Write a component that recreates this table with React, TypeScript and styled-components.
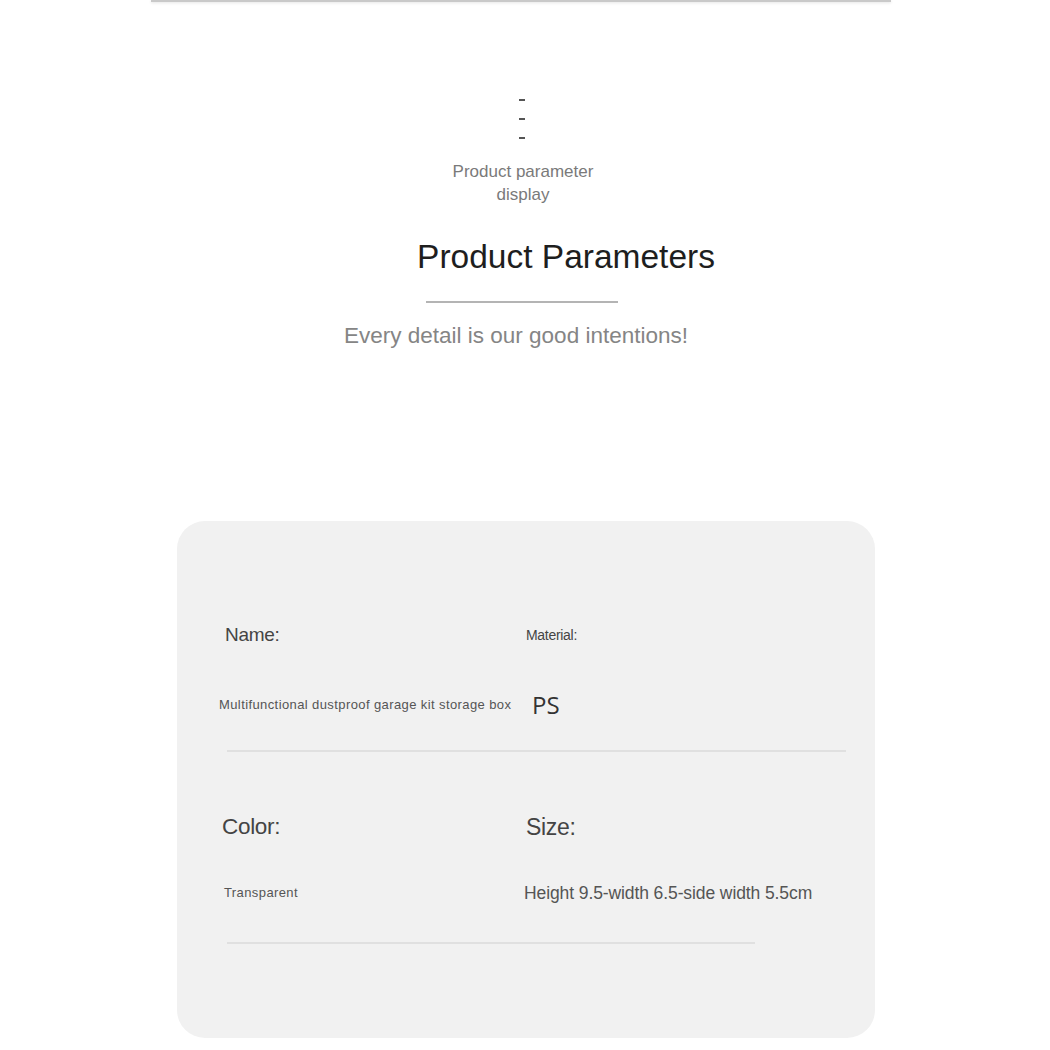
import React from "react";
import styled, { createGlobalStyle } from "styled-components";

const Global = createGlobalStyle`
  html, body { margin: 0; padding: 0; background: #ffffff; }
  body { font-family: "Liberation Sans", Arial, sans-serif; }
`;

const Page = styled.div`
  width: 1050px;
  height: 1050px;
  display: flex;
  flex-direction: column;
  overflow: hidden;
  background: #fff;
`;

const TopRule = styled.div`
  margin-left: 151px;
  width: 740px;
  height: 2px;
  background: #c9c9c9;
  box-shadow: 0 1px 3px rgba(0, 0, 0, 0.12);
`;

const Dashes = styled.div`
  margin-top: 97px;
  margin-left: 519px;
  display: flex;
  flex-direction: column;
  gap: 17px;
`;

const Dash = styled.span`
  display: block;
  width: 6px;
  height: 2px;
  background: #555;
`;

const Centered = styled.div<{ $shift: number }>`
  width: 1050px;
  text-align: center;
  box-sizing: border-box;
  padding-left: ${(p) => (p.$shift > 0 ? p.$shift * 2 : 0)}px;
  padding-right: ${(p) => (p.$shift < 0 ? -p.$shift * 2 : 0)}px;
`;

const Kicker = styled(Centered)`
  margin-top: 21px;
  font-size: 17px;
  line-height: 23px;
  color: #7a7a7a;
`;

const Title = styled(Centered)`
  margin-top: 32px;
  font-size: 33.5px;
  line-height: 38px;
  color: #1e1e1e;
`;

const Underline = styled.div`
  margin-top: 25px;
  margin-left: 426px;
  width: 192px;
  height: 2px;
  background: #b4b4b4;
`;

const Tagline = styled(Centered)`
  margin-top: 21px;
  font-size: 22.5px;
  line-height: 24px;
  color: #858585;
`;

const Card = styled.div`
  margin-top: 173px;
  margin-left: 177px;
  width: 698px;
  height: 517px;
  box-sizing: border-box;
  background: #f1f1f1;
  border-radius: 28px;
  padding: 103px 28px 0 42px;
  display: flex;
  flex-direction: column;
`;

const Row = styled.div<{ $labelTop: number; $valueGap: number }>`
  display: grid;
  grid-template-columns: 302px 1fr;
  margin-top: ${(p) => p.$labelTop}px;
  row-gap: ${(p) => p.$valueGap}px;
  align-items: center;
`;

const Label = styled.div<{ $size: number; $dx?: number }>`
  font-size: ${(p) => p.$size}px;
  line-height: 22px;
  color: #444;
  margin-left: ${(p) => p.$dx ?? 0}px;
  letter-spacing: -0.3px;
`;

const Value = styled.div<{
  $size: number;
  $dx?: number;
  $color?: string;
  $font?: string;
  $spacing?: number;
}>`
  font-size: ${(p) => p.$size}px;
  line-height: 22px;
  color: ${(p) => p.$color ?? "#555"};
  margin-left: ${(p) => p.$dx ?? 0}px;
  letter-spacing: ${(p) => p.$spacing ?? 0}px;
  white-space: nowrap;
  font-family: ${(p) => p.$font ?? `"Liberation Sans", Arial, sans-serif`};
`;

const Divider = styled.div<{ $width: number; $top: number }>`
  margin-top: ${(p) => p.$top}px;
  margin-left: 8px;
  width: ${(p) => p.$width}px;
  height: 2px;
  background: #e0e0e0;
`;

export default function App() {
  return (
    <Page>
      <Global />
      <TopRule />
      <Dashes>
        <Dash />
        <Dash />
        <Dash />
      </Dashes>
      <Kicker $shift={-2}>
        Product parameter
        <br />
        display
      </Kicker>
      <Title $shift={41}>Product Parameters</Title>
      <Underline />
      <Tagline $shift={-9}>Every detail is our good intentions!</Tagline>
      <Card>
        <Row $labelTop={0} $valueGap={48}>
          <Label $size={19} $dx={6}>Name:</Label>
          <Label $size={14} $dx={5}>Material:</Label>
          <Value $size={13} $color="#555" $spacing={0.4}>
            Multifunctional dustproof garage kit storage box
          </Value>
          <Value $size={24} $dx={11} $color="#333" $font={`"Open Sans", sans-serif`}>
            PS
          </Value>
        </Row>
        <Divider $width={619} $top={34} />
        <Row $labelTop={64} $valueGap={44}>
          <Label $size={22.5} $dx={3}>Color:</Label>
          <Label $size={23} $dx={5}>Size:</Label>
          <Value $size={13} $dx={5} $color="#555" $spacing={0.4}>
            Transparent
          </Value>
          <Value $size={17.5} $dx={3} $color="#555" $spacing={-0.1}>
            Height 9.5-width 6.5-side width 5.5cm
          </Value>
        </Row>
        <Divider $width={528} $top={38} />
      </Card>
    </Page>
  );
}
